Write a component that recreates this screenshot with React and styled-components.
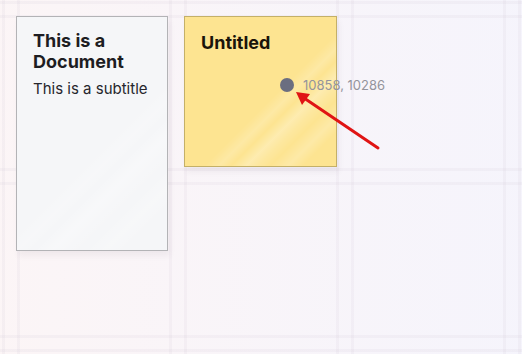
import React from 'react';
import styled, {createGlobalStyle} from 'styled-components';

const GlobalStyle = createGlobalStyle`
  html, body {
    margin: 0;
    padding: 0;
    background: #f8f6f9;
  }
  body {
    font-family: Inter, "Noto Sans", sans-serif;
  }
`;

// faint double grid lines, period 167px
const gridLine = 'rgba(200, 190, 205, 0.12)';

const Board = styled.div`
  position: relative;
  width: 522px;
  height: 354px;
  overflow: hidden;
  box-sizing: border-box;
  padding: 16px;
  display: flex;
  align-items: flex-start;
  gap: 16px;
  background-color: #f8f6f9;
  background-image:
    linear-gradient(to right, transparent 0, transparent 2px, ${gridLine} 2px, ${gridLine} 5px, transparent 5px, transparent 17px, ${gridLine} 17px, ${gridLine} 20px, transparent 20px),
    linear-gradient(to bottom, transparent 0, transparent 1px, ${gridLine} 1px, ${gridLine} 4px, transparent 4px, transparent 15px, ${gridLine} 15px, ${gridLine} 18px, transparent 18px),
    linear-gradient(to right, rgba(252, 245, 246, 0.9), rgba(245, 244, 252, 0.9));
  background-size: 167px 100%, 100% 167px, 100% 100%;
  background-repeat: repeat-x, repeat-y, no-repeat;
`;

const Card = styled.div`
  position: relative;
  flex: none;
  box-sizing: border-box;
  width: ${p => p.$w}px;
  height: ${p => p.$h}px;
  padding: ${p => p.$pad};
  background: ${p => (p.$tone === 'note' ? '#fde491' : '#f5f6f8')};
  border: 1px solid ${p => (p.$tone === 'note' ? '#c4b068' : '#b3b3b6')};
  box-shadow: 2px 5px 6px rgba(60, 50, 70, 0.06);
  overflow: hidden;

  &::after {
    content: '';
    position: absolute;
    inset: 0;
    pointer-events: none;
    background: linear-gradient(
      135deg,
      transparent 56%,
      rgba(255, 255, 255, 0.18) 61%,
      transparent 65%,
      rgba(255, 255, 255, 0.28) 70%,
      rgba(255, 255, 255, 0.12) 74%,
      transparent 78%,
      rgba(255, 255, 255, 0.2) 84%,
      transparent 89%
    );
  }
`;

const Title = styled.div`
  font-size: 18px;
  font-weight: 700;
  line-height: 21px;
  color: ${p => p.$color || '#1d1d22'};
`;

const Subtitle = styled.div`
  margin-top: 8px;
  font-size: 15px;
  line-height: 18px;
  color: #26262c;
`;

const CursorDot = styled.div`
  position: absolute;
  left: 280px;
  top: 78px;
  width: 14px;
  height: 14px;
  border-radius: 50%;
  background: #6b6e80;
`;

const Coords = styled.div`
  position: absolute;
  left: 303px;
  top: 76px;
  font-size: 13px;
  line-height: 18px;
  color: #94949c;
`;

const Arrow = styled.svg`
  position: absolute;
  inset: 0;
  pointer-events: none;
`;

export default function App() {
  return (
    <>
      <GlobalStyle/>
      <Board>
        <Card $tone="doc" $w={152} $h={235} $pad="13px 16px">
          <Title>This is a Document</Title>
          <Subtitle>This is a subtitle</Subtitle>
        </Card>
        <Card $tone="note" $w={153} $h={151} $pad="15px 16px">
          <Title $color="#1a140a">Untitled</Title>
        </Card>
        <CursorDot/>
        <Coords>10858, 10286</Coords>
        <Arrow width="522" height="354" viewBox="0 0 522 354">
          <line x1="378" y1="148" x2="304" y2="98" stroke="#e01414" strokeWidth="3" strokeLinecap="round"/>
          <polygon points="296,92 310,94 302,105" fill="#e01414"/>
        </Arrow>
      </Board>
    </>
  );
}
